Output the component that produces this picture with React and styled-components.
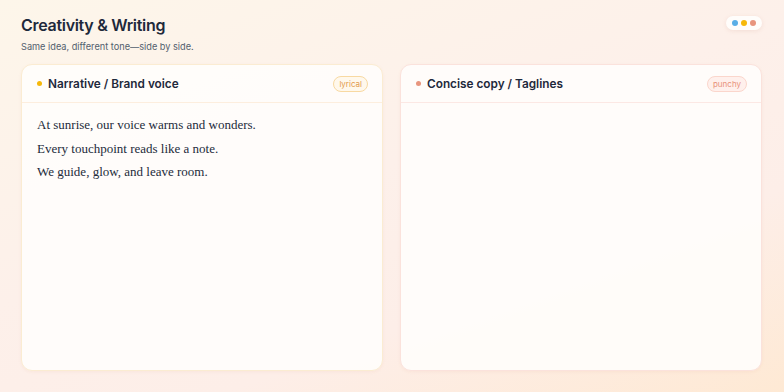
import React from "react";
import styled, { createGlobalStyle } from "styled-components";

const Global = createGlobalStyle`
  html, body { margin: 0; padding: 0; }
  body {
    width: 784px; height: 392px; overflow: hidden;
    font-family: Inter, "Noto Sans", sans-serif;
  }
  #root { height: 100%; }
`;

const Page = styled.div`
  box-sizing: border-box;
  width: 784px;
  height: 392px;
  padding: 14px 22px 21px 21px;
  display: flex;
  flex-direction: column;
  background: linear-gradient(160deg, #fdf6ea 0%, #fdf0ea 45%, #fdeee8 70%, #fee9d4 100%);
`;

const Header = styled.div`
  display: flex;
  justify-content: space-between;
  align-items: flex-start;
  height: 50px;
`;

const TitleBlock = styled.div`
  display: flex;
  flex-direction: column;
`;

const Title = styled.h1`
  margin: 0;
  font-size: 16px;
  font-weight: 600;
  color: #1e293b;
  letter-spacing: -0.3px;
  line-height: 22px;
`;

const Subtitle = styled.p`
  margin: 5px 0 0 0;
  font-size: 9.2px;
  color: #52606d;
  line-height: 12px;
`;

const DotPill = styled.div`
  display: flex;
  gap: 3px;
  align-items: center;
  padding: 4px 6px;
  margin-top: 2px;
  background: #fffdfb;
  border-radius: 999px;
  box-shadow: 0 1px 4px rgba(200, 140, 120, 0.18);
`;

const Dot = styled.span`
  display: block;
  width: ${(p) => p.size || 5}px;
  height: ${(p) => p.size || 5}px;
  border-radius: 50%;
  background: ${(p) => p.color};
`;

const Columns = styled.div`
  flex: 1;
  display: grid;
  grid-template-columns: 1fr 1fr;
  gap: 17px;
`;

const Panel = styled.section`
  display: flex;
  flex-direction: column;
  background: rgba(255, 253, 251, 0.93);
  border: 1px solid ${(p) => p.border};
  border-radius: 11px;
  box-shadow: 0 1px 3px rgba(230, 170, 140, 0.12);
  overflow: hidden;
`;

const PanelHead = styled.div`
  display: flex;
  align-items: center;
  justify-content: space-between;
  height: 37px;
  padding: 0 14px 0 15px;
  border-bottom: 1px solid ${(p) => p.line};
`;

const PanelTitle = styled.div`
  display: flex;
  align-items: center;
  gap: 6px;
  font-size: 11.8px;
  font-weight: 600;
  color: #1e293b;
`;

const Badge = styled.span`
  font-size: 8px;
  line-height: 10px;
  padding: 2px 5px;
  border-radius: 999px;
  border: 1px solid ${(p) => p.border};
  background: ${(p) => p.bg};
  color: ${(p) => p.color};
`;

const Body = styled.div`
  padding: 10px 15px;
  font-family: "Liberation Serif", "Times New Roman", serif;
  font-size: 13px;
  color: #232b3a;
`;

const Line = styled.p`
  margin: 0;
  line-height: 23.5px;
`;

export default function App() {
  return (
    <>
      <Global />
      <Page>
        <Header>
          <TitleBlock>
            <Title>Creativity &amp; Writing</Title>
            <Subtitle>Same idea, different tone—side by side.</Subtitle>
          </TitleBlock>
          <DotPill>
            <Dot size={6} color="#5aaee6" />
            <Dot size={6} color="#f6b80a" />
            <Dot size={6} color="#e8957e" />
          </DotPill>
        </Header>
        <Columns>
          <Panel border="#fbecd2">
            <PanelHead line="#fdeede">
              <PanelTitle>
                <Dot color="#f6b80a" />
                Narrative / Brand voice
              </PanelTitle>
              <Badge border="#f8d9a2" bg="#fff8ec" color="#e39a4c">lyrical</Badge>
            </PanelHead>
            <Body>
              <Line>At sunrise, our voice warms and wonders.</Line>
              <Line>Every touchpoint reads like a note.</Line>
              <Line>We guide, glow, and leave room.</Line>
            </Body>
          </Panel>
          <Panel border="#fbe2dc">
            <PanelHead line="#fce8e4">
              <PanelTitle>
                <Dot color="#e8957e" />
                Concise copy / Taglines
              </PanelTitle>
              <Badge border="#fbd6cc" bg="#fff0ec" color="#e8907a">punchy</Badge>
            </PanelHead>
            <Body />
          </Panel>
        </Columns>
      </Page>
    </>
  );
}
